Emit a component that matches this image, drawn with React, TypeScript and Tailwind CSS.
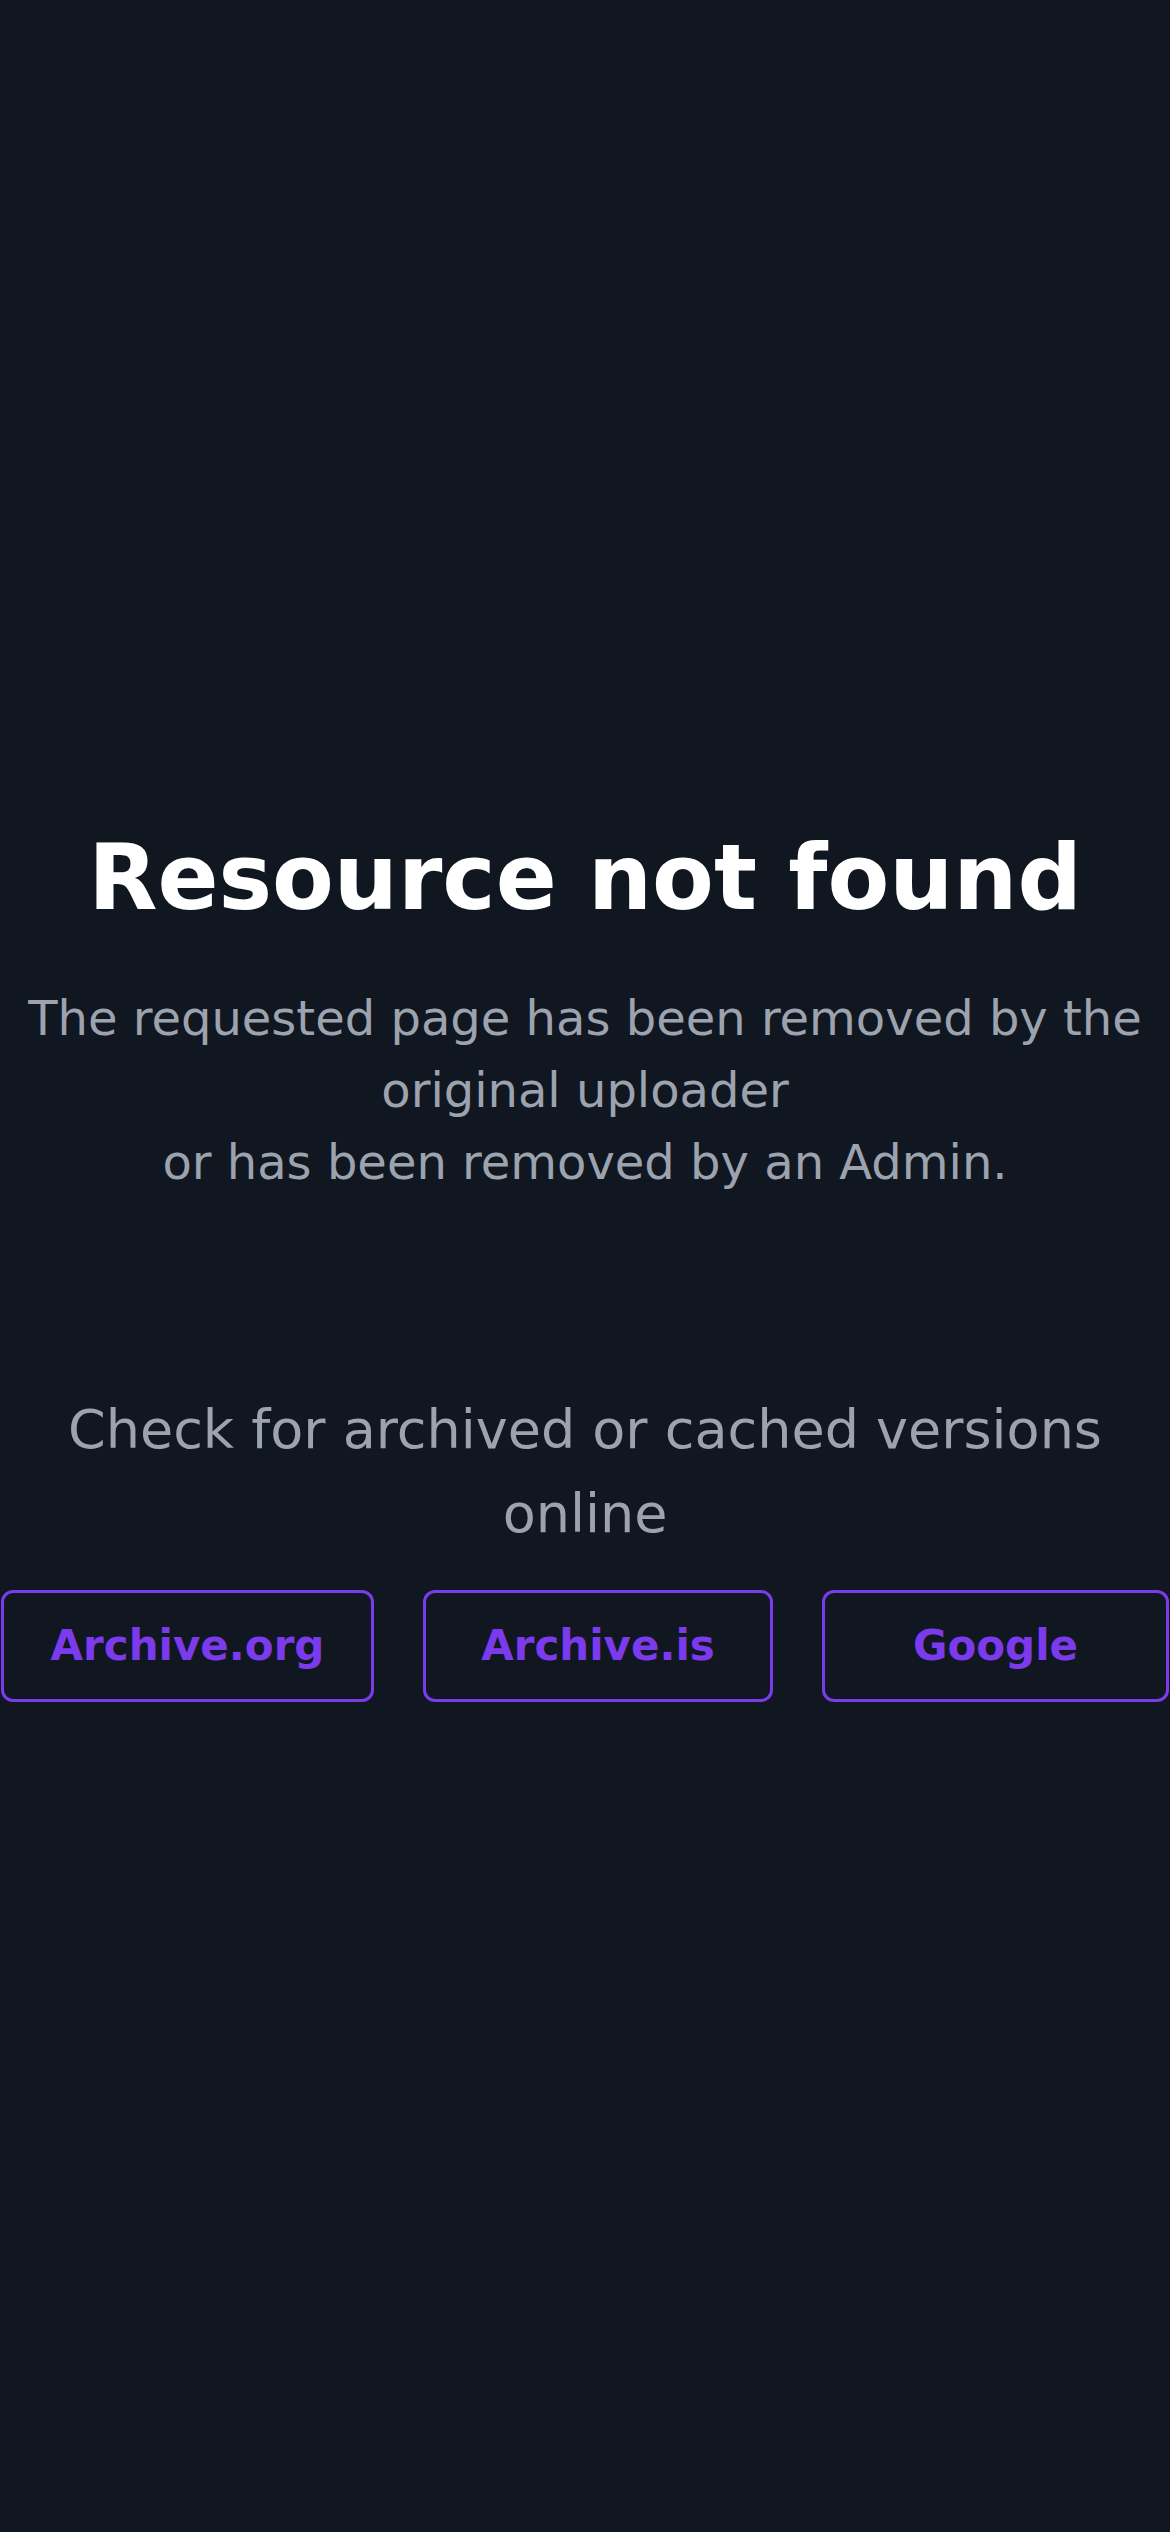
import React from "react";

export default function App() {
  return (
    <div
      className="min-h-screen w-full bg-[#111720] pt-[824px]"
      style={{ fontFamily: '"DejaVu Sans", "Liberation Sans", sans-serif' }}
    >
      <h1 className="text-center text-[90px] leading-[108px] font-bold text-white">
        Resource not found
      </h1>
      <p className="mt-[50px] px-[24px] text-center text-[48px] leading-[72px] text-[#9ca3af]">
        The requested page has been removed by the original uploader
        <br />
        or has been removed by an Admin.
      </p>
      <p className="mt-[190px] text-center text-[54px] leading-[84px] text-[#9ca3af]">
        Check for archived or cached versions online
      </p>
      <div className="mt-[34px] flex gap-[49px] pl-[1px]">
        <a className="flex h-[112px] w-[373px] items-center justify-center rounded-[12px] border-[3px] border-[#7c3aed] text-[42px] leading-[60px] font-bold text-[#7c3aed]">
          Archive.org
        </a>
        <a className="flex h-[112px] w-[350px] items-center justify-center rounded-[12px] border-[3px] border-[#7c3aed] text-[42px] leading-[60px] font-bold text-[#7c3aed]">
          Archive.is
        </a>
        <a className="flex h-[112px] w-[347px] items-center justify-center rounded-[12px] border-[3px] border-[#7c3aed] text-[42px] leading-[60px] font-bold text-[#7c3aed]">
          Google
        </a>
      </div>
    </div>
  );
}
